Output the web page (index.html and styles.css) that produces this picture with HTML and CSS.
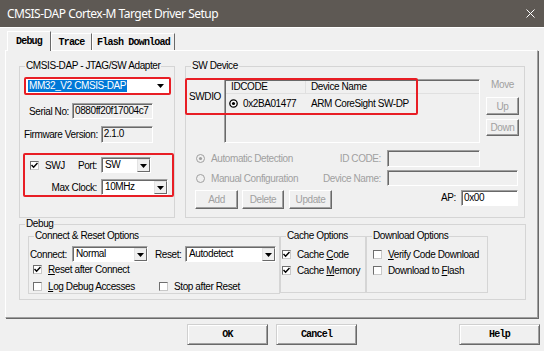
FILE: index.html
```html
<!DOCTYPE html>
<html lang="en">
<head>
<meta charset="utf-8">
<title>CMSIS-DAP Cortex-M Target Driver Setup</title>
<link rel="stylesheet" href="styles.css">
</head>
<body>
<div class="titlebar">
  <span class="title">CMSIS-DAP Cortex-M Target Driver Setup</span>
  <svg class="close" width="9" height="9" viewBox="0 0 9 9"><path d="M0.5 0.5L8.5 8.5M8.5 0.5L0.5 8.5" stroke="#fff" stroke-width="1" fill="none"/></svg>
</div>
<div class="tabs">
  <div class="tab active t-debug">Debug</div>
  <div class="tab t-trace">Trace</div>
  <div class="tab t-flash">Flash Download</div>
</div>
<div class="panel">
  <div class="toprow">
    <fieldset class="grp adapter">
      <legend>CMSIS-DAP - JTAG/SW Adapter</legend>
      <div class="adbody">
        <div class="dcombo"><span class="sel">MM32_V2 CMSIS-DAP</span><span class="arr"><svg width="7" height="4" viewBox="0 0 7 4"><path d="M0 0H7L3.5 4Z" fill="#000"/></svg></span></div>
        <div class="frow r-serial"><span>Serial No:</span><span class="field w-serial">0880ff20f17004c7</span></div>
        <div class="frow r-fw"><span>Firmware Version:</span><span class="field w-fw">2.1.0</span></div>
        <div class="swj">
          <div class="swrow r1">
            <span class="lcell"><span class="chk"><span class="cb"><svg width="7" height="7" viewBox="0 0 7 7"><path d="M0.5 3L2.6 5.2L6.5 1" fill="none" stroke="#000" stroke-width="1.5"/></svg></span>SWJ</span><span>Port:</span></span>
            <div class="combo w-port"><span class="cv">SW</span><span class="dd"><svg width="7" height="4" viewBox="0 0 7 4"><path d="M0 0H7L3.5 4Z" fill="#000"/></svg></span></div>
          </div>
          <div class="swrow r2">
            <span class="lcell end">Max Clock:</span>
            <div class="combo w-clk"><span class="cv">10MHz</span><span class="dd"><svg width="7" height="4" viewBox="0 0 7 4"><path d="M0 0H7L3.5 4Z" fill="#000"/></svg></span></div>
          </div>
        </div>
      </div>
    </fieldset>
    <fieldset class="grp swdev">
      <legend>SW Device</legend>
      <div class="devtop">
        <div class="swdio">SWDIO</div>
        <div class="lv">
          <div class="lvh"><span class="c1">IDCODE</span><span class="c2">Device Name</span></div>
          <div class="lvr"><span class="c1"><svg width="9" height="9" viewBox="0 0 9 9"><circle cx="4.5" cy="4.5" r="3.7" fill="#fff" stroke="#000" stroke-width="1.3"/><circle cx="4.5" cy="4.5" r="1.6" fill="#000"/></svg>0x2BA01477</span><span class="c2">ARM CoreSight SW-DP</span></div>
        </div>
        <div class="move">
          <div class="mlbl">Move</div>
          <div class="btn dis m-up">Up</div>
          <div class="btn dis m-down">Down</div>
        </div>
        <div class="hl"></div>
      </div>
      <div class="cfg">
        <span class="rad"><svg width="9" height="9" viewBox="0 0 9 9"><circle cx="4.5" cy="4.5" r="4" fill="#f0f0f0" stroke="#a0a0a0"/><circle cx="4.5" cy="4.5" r="1.6" fill="#a0a0a0"/></svg>Automatic Detection</span>
        <span class="clbl">ID CODE:</span>
        <span class="field w-id"></span>
        <span class="rad"><svg width="9" height="9" viewBox="0 0 9 9"><circle cx="4.5" cy="4.5" r="4" fill="#f0f0f0" stroke="#a0a0a0"/></svg>Manual Configuration</span>
        <span class="clbl">Device Name:</span>
        <span class="field w-dn"></span>
      </div>
      <div class="acts">
        <div class="btn dis w-add">Add</div>
        <div class="btn dis w-del">Delete</div>
        <div class="btn dis w-upd">Update</div>
        <span class="ap">AP:</span>
        <span class="field white w-ap">0x00</span>
      </div>
    </fieldset>
  </div>
  <fieldset class="grp debug">
    <legend>Debug</legend>
    <div class="dbody">
      <fieldset class="grp cro">
        <legend>Connect &amp; Reset Options</legend>
        <div class="crbody">
          <div class="conrow">
            <span class="clab">Connect:</span>
            <div class="combo w-con"><span class="cv">Normal</span><span class="dd"><svg width="7" height="4" viewBox="0 0 7 4"><path d="M0 0H7L3.5 4Z" fill="#000"/></svg></span></div>
            <span class="rlbl">Reset:</span>
            <div class="combo w-rst"><span class="cv">Autodetect</span><span class="dd"><svg width="7" height="4" viewBox="0 0 7 4"><path d="M0 0H7L3.5 4Z" fill="#000"/></svg></span></div>
          </div>
          <div class="ckrow first">
            <span class="opt"><span class="cb"><svg width="7" height="7" viewBox="0 0 7 7"><path d="M0.5 3L2.6 5.2L6.5 1" fill="none" stroke="#000" stroke-width="1.5"/></svg></span><span><u>R</u>eset after Connect</span></span>
          </div>
          <div class="ckrow">
            <span class="opt wide"><span class="cb"></span><span><u>L</u>og Debug Accesses</span></span>
            <span class="opt"><span class="cb"></span><span>Stop after Reset</span></span>
          </div>
        </div>
      </fieldset>
      <fieldset class="grp cache">
        <legend>Cache Options</legend>
        <div class="ckbody cbody">
          <span class="opt"><span class="cb"><svg width="7" height="7" viewBox="0 0 7 7"><path d="M0.5 3L2.6 5.2L6.5 1" fill="none" stroke="#000" stroke-width="1.5"/></svg></span><span>Cache <u>C</u>ode</span></span>
          <span class="opt"><span class="cb"><svg width="7" height="7" viewBox="0 0 7 7"><path d="M0.5 3L2.6 5.2L6.5 1" fill="none" stroke="#000" stroke-width="1.5"/></svg></span><span>Cache <u>M</u>emory</span></span>
        </div>
      </fieldset>
      <fieldset class="grp dl">
        <legend>Download Options</legend>
        <div class="ckbody dlbody">
          <span class="opt"><span class="cb"></span><span><u>V</u>erify Code Download</span></span>
          <span class="opt"><span class="cb"></span><span>Download to <u>F</u>lash</span></span>
        </div>
      </fieldset>
    </div>
  </fieldset>
</div>
<div class="btns">
  <div class="pbtn">OK</div>
  <div class="pbtn cancel">Cancel</div>
  <div class="pbtn help">Help</div>
</div>
</body>
</html>
```

FILE: styles.css
```css
* { box-sizing: border-box; }
html, body { margin: 0; padding: 0; }
body {
  width: 544px; height: 351px; overflow: hidden;
  background: #f0f0f0;
  font-family: "Liberation Sans", Arial, sans-serif;
  font-size: 10px; line-height: 13px; letter-spacing: -0.4px; color: #000;
  white-space: nowrap;
}
.titlebar {
  height: 28px; background: #5e5954; border-bottom: 1px solid #fff;
  display: flex; align-items: center; justify-content: space-between;
  padding: 0 9px 0 7px;
}
.title { font-family: "Noto Sans", sans-serif; font-size: 12px; color: #fff; letter-spacing: -0.5px; }
.close { display: block; }

.tabs { height: 22px; display: flex; align-items: flex-end; padding-left: 7px; }
.tab {
  height: 17px; font-family: "Liberation Mono", monospace; font-weight: bold;
  font-size: 10px; letter-spacing: -0.8px;
  border-top: 1px solid #fff; border-left: 1px solid #fff; border-right: 1px solid #696969;
  display: flex; align-items: center; justify-content: center;
}
.tab.active { height: 20px; margin-bottom: -1px; position: relative; z-index: 1; background: #f0f0f0; }
.t-debug { width: 44px; }
.t-trace { width: 41px; }
.t-flash { width: 83px; }

.panel {
  margin-left: 5px; width: 533px; height: 268px;
  border: 1px solid; border-color: #fff #a0a0a0 #a0a0a0 #fff;
  box-shadow: 1px 1px 0 #696969;
  padding: 9px 0 0 13px;
}

fieldset.grp { margin: 0; padding: 0; border: 1px solid #d5d5d5; min-width: 0; }
fieldset.grp > legend { padding: 0 1px; margin-left: 5px; line-height: 12px; height: 12px; }

.toprow { display: flex; gap: 10px; height: 158px; }
.adapter { width: 156px; height: 158px; }
.swdev { width: 340px; height: 158px; }

.adbody { padding: 5px 0 0 4px; display: flex; flex-direction: column; align-items: flex-start; }
.dcombo {
  width: 147px; height: 18px; border: 2px solid #e81e25; border-radius: 2px; background: #fff;
  display: flex; align-items: center; padding-left: 2px;
}
.sel { background: #0078d7; color: #fff; height: 12px; line-height: 12px; padding: 0 1px; }
.arr { margin-left: auto; margin-right: 5px; display: flex; }

.frow { width: 129px; display: flex; justify-content: flex-end; align-items: center; gap: 3px; }
.r-serial { margin-top: 8px; height: 16px; }
.r-fw { margin-top: 7px; height: 17px; }

.field {
  display: block; height: 16px; background: #f0f0f0;
  border: 1px solid; border-color: #a0a0a0 #fff #fff #a0a0a0;
  box-shadow: inset 1px 1px 0 #696969;
  padding-left: 2px; line-height: 14px; overflow: hidden;
}
.field.white { background: #fff; }
.w-serial { width: 81px; }
.w-fw { width: 53px; height: 17px; }

.swj {
  margin: 10px 0 0 -1px; width: 151px; height: 44px;
  border: 2px solid #e81e25; border-radius: 2px; padding-left: 5px;
}
.swrow { display: flex; align-items: center; height: 16px; }
.r1 { margin-top: 2px; }
.r2 { margin-top: 6px; }
.lcell { width: 67px; margin-right: 4px; display: flex; justify-content: space-between; align-items: center; }
.lcell.end { justify-content: flex-end; }
.chk { display: flex; align-items: center; gap: 6px; }

.cb {
  width: 9px; height: 9px; flex: none; background: #fff;
  border: 1px solid; border-color: #6e6e6e #c8c8c8 #c8c8c8 #6e6e6e;
  display: inline-flex; align-items: center; justify-content: center;
}
.cb svg { display: block; }

.combo {
  display: flex; height: 16px; background: #fff;
  border: 1px solid; border-color: #a0a0a0 #fff #fff #a0a0a0;
  box-shadow: inset 1px 1px 0 #696969;
}
.cv { flex: 1; padding-left: 3px; line-height: 14px; }
.dd {
  width: 13px; margin: 1px 0 0 0; background: #f0f0f0;
  border: 1px solid; border-color: #e3e3e3 #696969 #696969 #e3e3e3;
  display: flex; align-items: center; justify-content: center;
}
.w-port { width: 50px; }
.w-clk { width: 67px; }

/* SW Device */
.devtop { display: flex; margin-top: 6px; height: 65px; position: relative; }
.swdio { width: 38px; height: 36px; display: flex; align-items: center; justify-content: center; }
.lv {
  margin-top: 1px; width: 256px; height: 64px; background: #f0f0f0;
  border: 1px solid; border-color: #a0a0a0 #fff #fff #a0a0a0;
  box-shadow: inset 1px 1px 0 #696969; padding: 1px 0 0 1px;
}
.lvh { display: flex; height: 13px; border-bottom: 1px solid #e0e0e0; line-height: 12px; }
.lvh .c1 { width: 80px; padding-left: 5px; border-right: 1px solid #e0e0e0; }
.c2 { padding-left: 5px; }
.lvr { display: flex; height: 16px; margin-top: 1px; align-items: center; }
.lvr .c1 { width: 80px; padding-left: 3px; display: flex; align-items: center; gap: 5px; }
.lvr svg { display: block; }

.move { margin-left: 6px; width: 33px; display: flex; flex-direction: column; align-items: center; }
.mlbl { color: #a0a0a0; }
.btn {
  display: flex; align-items: center; justify-content: center;
  border: 1px solid; border-color: #fff #696969 #696969 #fff;
  box-shadow: inset -1px -1px 0 #a0a0a0;
}
.btn.dis { color: #a0a0a0; }
.m-up { width: 33px; height: 18px; margin-top: 6px; }
.m-down { width: 33px; height: 17px; margin-top: 4px; }
.hl {
  position: absolute; left: -1px; top: 0; width: 233px; height: 37px;
  border: 2px solid #e81e25; border-radius: 2px;
}

.cfg {
  display: grid; grid-template-columns: 104px 75px auto; column-gap: 6px;
  grid-template-rows: 17px 16px; row-gap: 3px;
  margin-top: 7px; padding-left: 10px; align-items: center;
}
.rad { display: flex; align-items: center; gap: 6px; color: #a0a0a0; }
.rad svg { display: block; }
.clbl { color: #a0a0a0; text-align: right; }
.w-id { width: 93px; height: 17px; }
.w-dn { width: 131px; }

.acts { display: flex; align-items: flex-start; margin-top: 4px; padding: 0 6px 0 9px; }
.w-add { width: 43px; height: 19px; }
.w-del { width: 42px; height: 19px; margin-left: 4px; }
.w-upd { width: 43px; height: 19px; margin-left: 5px; }
.ap { margin-left: auto; margin-right: 5px; line-height: 16px; }
.w-ap { width: 57px; }

/* Debug */
.debug { margin: 6px 0 0 3px; width: 507px; height: 82px; }
.debug > legend { margin-left: 8px; }
.dbody { display: flex; padding-left: 8px; }
.cro { width: 252px; height: 64px; }
.cro > legend { margin-left: 2px; }
.cache { width: 86px; height: 63px; margin: -1px 0 0 17px; }
.cache > legend { margin-left: 1px; }
.dl { width: 122px; height: 63px; margin: -1px 0 0 9px; }
.dl > legend { margin-left: 6px; }

.crbody { padding: 4px 0 0 1px; }
.conrow { display: flex; align-items: center; height: 16px; }
.clab { width: 42px; }
.w-con { width: 76px; }
.rlbl { width: 30px; margin-left: 7px; }
.w-rst { width: 91px; }
.ckrow { display: flex; height: 13px; padding-left: 3px; margin-top: 4px; }
.ckrow.first { margin-top: 1px; }
.opt { display: flex; align-items: center; gap: 6px; height: 13px; }
.opt.wide { width: 126px; }
.ckbody { display: flex; flex-direction: column; gap: 3px; padding-top: 6px; }
.cbody { padding-left: 1px; }
.dlbody { padding-left: 6px; }

/* bottom buttons */
.btns { display: flex; margin-top: 6px; padding-left: 187px; }
.pbtn {
  width: 81px; height: 21px; display: flex; align-items: center; justify-content: center;
  font-family: "Liberation Mono", monospace; font-weight: bold; font-size: 10px; letter-spacing: -0.8px;
  border: 1px solid; border-color: #d0d0d0 #696969 #696969 #d0d0d0;
  box-shadow: inset 1px 1px 0 #fff, inset -1px -1px 0 #a0a0a0;
}
.cancel { margin-left: 8px; }
.help { margin-left: 102px; }
```
